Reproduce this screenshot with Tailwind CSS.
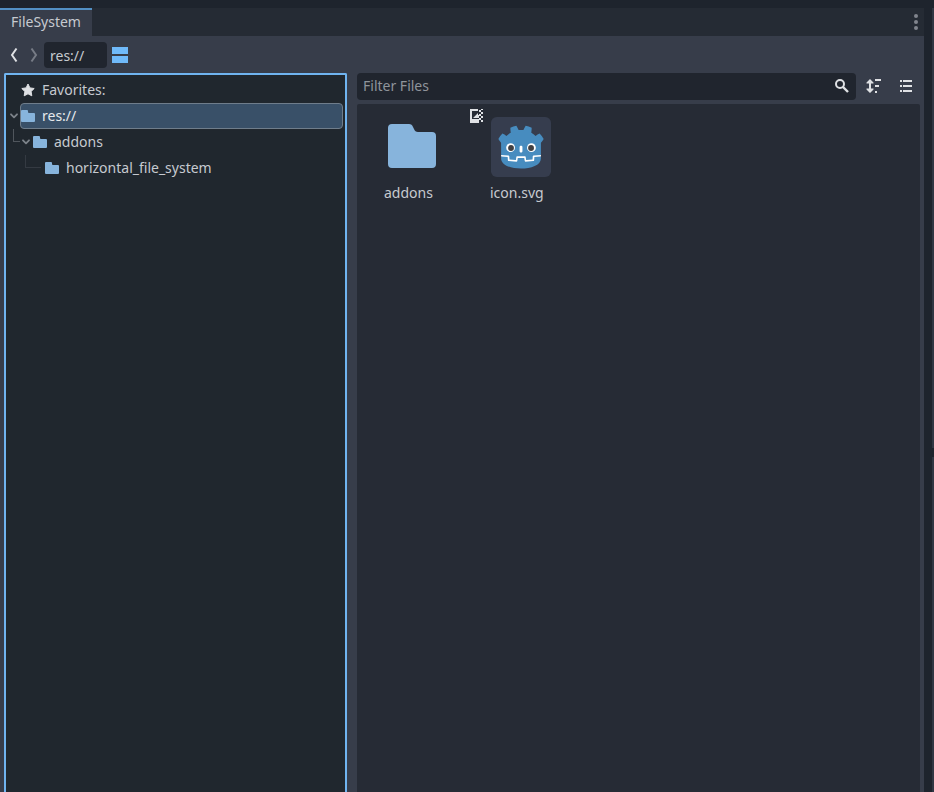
<!DOCTYPE html>
<html lang="en">
<head>
    <meta charset="UTF-8">
    <meta name="viewport" content="width=device-width, initial-scale=1.0">
    <title>FileSystem</title>
    <script src="https://cdn.jsdelivr.net/npm/@tailwindcss/browser@4"></script>
</head>
<body class="h-screen overflow-hidden bg-[#1e242d] text-sm text-[#c6cad0] font-['Noto_Sans',sans-serif]">
    <svg class="hidden">
        <symbol id="folder" viewBox="0 0 14 12">
            <path fill="#87b4dc" d="M1 0h5q1 0 1 1v1q0 1 1 1h5q1 0 1 1v7q0 1-1 1H1q-1 0-1-1V1q0-1 1-1z"/>
        </symbol>
        <symbol id="arrow" viewBox="0 0 8 6">
            <path fill="none" stroke="#7c8289" stroke-width="1.8" stroke-linecap="round" stroke-linejoin="round" d="M1 1.3l3 3 3-3"/>
        </symbol>
    </svg>

    <div class="flex h-full pt-2">
        <div class="flex flex-col flex-1 min-w-0 bg-[#373d4a]">
            <!-- Tab bar -->
            <div class="flex justify-between h-7 bg-[#252b34]">
                <button class="h-7 px-[11px] pb-[2px] border-t-2 border-[#5390c4] bg-[#373d4a]">FileSystem</button>
                <button class="w-4 flex justify-center items-center" aria-label="Dock options">
                    <svg class="w-4 h-4" viewBox="0 0 16 16" fill="#81858d">
                        <circle cx="8" cy="2" r="2"/><circle cx="8" cy="8" r="2"/><circle cx="8" cy="14" r="2"/>
                    </svg>
                </button>
            </div>

            <!-- Path bar -->
            <div class="flex items-center h-9 pt-[2px] pl-1">
                <button class="w-5 flex justify-center" aria-label="Back">
                    <svg class="w-2 h-4" viewBox="0 0 8 16" fill="none" stroke="#dfe1e4" stroke-width="2"><path d="M6.500 1.500L2 8l4.500 6.500"/></svg>
                </button>
                <button class="w-5 flex justify-center" aria-label="Forward">
                    <svg class="w-2 h-4" viewBox="0 0 8 16" fill="none" stroke="#777c86" stroke-width="2"><path d="M1.500 1.500L6 8l-4.500 6.500"/></svg>
                </button>
                <input type="text" value="res://" aria-label="Path" class="w-[63px] h-[26px] px-[6px] rounded-sm bg-[#20252e] outline-none">
                <button class="w-[26px] flex justify-center" aria-label="Change split mode">
                    <svg class="w-4 h-4" viewBox="0 0 16 16" fill="#70bafa"><path d="M0 0h16v7H0zM0 9h16v7H0z"/></svg>
                </button>
            </div>

            <div class="flex flex-1 min-h-0 gap-[10px] pt-[1px] px-1">
                <!-- Folder tree -->
                <ul class="w-[343px] shrink-0 pt-[2px] border-2 border-b-0 border-[#70b4f0] rounded-t-xs bg-[#20272e]">
                    <li class="flex items-center gap-[7px] h-[26px] pl-[15px]">
                        <svg class="w-[14px] h-[14px]" viewBox="0 0 14 14"><path fill="#dfe1e4" stroke="#dfe1e4" stroke-linejoin="round" d="M7 1l1.900 3.900 4.300.6-3.100 3 .7 4.300L7 10.800l-3.800 2 .7-4.300-3.100-3 4.300-.6z"/></svg>
                        <span>Favorites:</span>
                    </li>
                    <li class="flex items-center h-[26px] pl-1 pr-[2px]">
                        <svg class="w-2 h-[6px] mr-[2px]"><use href="#arrow"/></svg>
                        <div class="flex flex-1 items-center gap-[7px] h-full border border-[#6f7d8b] rounded-sm bg-[#395068] text-[#e6e9ec]">
                            <svg class="w-[14px] h-3"><use href="#folder"/></svg>
                            <span>res://</span>
                        </div>
                    </li>
                    <li class="flex items-center h-[26px] pl-[7px]">
                        <div class="w-[7px] h-[13px] mr-[2px] mb-[13px] border-l border-b border-[#50565d]"></div>
                        <svg class="w-2 h-[6px] mr-[3px]"><use href="#arrow"/></svg>
                        <svg class="w-[14px] h-3 mr-[7px]"><use href="#folder"/></svg>
                        <span>addons</span>
                    </li>
                    <li class="flex items-center h-[26px] pl-[19px]">
                        <div class="w-4 h-[13px] mr-1 mb-[13px] border-l border-b border-[#343a42]"></div>
                        <svg class="w-[14px] h-3 mr-[7px]"><use href="#folder"/></svg>
                        <span>horizontal_file_system</span>
                    </li>
                </ul>

                <!-- File list -->
                <div class="flex flex-col flex-1 min-w-0 gap-1">
                    <div class="flex h-[27px]">
                        <label class="flex flex-1 items-center min-w-0 px-[6px] pb-px rounded-sm bg-[#20252e]">
                            <input type="text" placeholder="Filter Files" aria-label="Filter Files" class="flex-1 min-w-0 outline-none placeholder:text-[#8f949b]">
                            <svg class="w-4 h-4" viewBox="0 0 16 16" fill="none" stroke="#dfe1e4" stroke-width="2"><circle cx="6" cy="6" r="4"/><path stroke-width="2.400" d="M9 9l5 5"/></svg>
                        </label>
                        <button class="w-9 pb-px flex justify-center items-center" aria-label="Sort files">
                            <svg class="w-4 h-4" viewBox="0 0 16 16" fill="#dfe1e4"><path d="M4 1L.5 4.500V5.500H3v5H.5v1L4 15l3.500-3.500v-1H5v-5h2.500v-1zM9 1h6v2H9zM9 7h4v2H9zM9 13h2v2H9z"/></svg>
                        </button>
                        <button class="w-7 pb-px flex justify-center items-center" aria-label="List view">
                            <svg class="w-4 h-4" viewBox="0 0 16 16" fill="#dfe1e4"><path d="M2 2h2v2H2zM2 7h2v2H2zM2 12h2v2H2zM5 2h9v2H5zM5 7h9v2H5zM5 12h9v2H5z"/></svg>
                        </button>
                    </div>

                    <ul class="flex flex-1 items-start pt-3 pl-[22px] rounded-t-xs bg-[#262b35]">
                        <li class="w-[66px] mr-[42px]">
                            <svg class="w-[66px] h-[62px]" viewBox="0 0 66 62"><path fill="#87b4dc" d="M13 8h17q3 0 4 3l1 2q1 3 4 3h14q4 0 4 4v28q0 4-4 4H13q-4 0-4-4V12q0-4 4-4z"/></svg>
                            <span class="block pl-[5px] mt-[5px]">addons</span>
                        </li>
                        <li class="relative w-[66px]">
                            <!-- image type badge -->
                            <svg class="absolute -left-[18px] -top-2 w-4 h-4" viewBox="0 0 16 16" fill="#dfe1e4">
                                <path d="M1 1h8v2H3v8h7v4H1zM4 10l5-5v2h1v3z"/>
                                <path d="M10 2h2v2h-2zM12 1h2v1h-2zM12 4h2v2h-2zM10 6h2v2h-2zM12 8h2v2h-2zM10 10h2v2h-2zM12 12h2v2h-2z"/>
                            </svg>
                            <svg class="w-[62px] h-[62px] ml-[3px]" viewBox="0 0 128 128">
                                <rect x="2" y="2" width="124" height="124" rx="12" fill="#363d4e"/>
                                <g fill="#fff" transform="scale(.101) translate(122 122)">
                                    <path d="M105 673v33q407 354 814 0v-33z"/>
                                    <path fill="#478cbf" d="m105 673 152 14q12 1 15 14l4 67 132 10 8-61q2-11 15-15h162q13 4 15 15l8 61 132-10 4-67q3-13 15-14l152-14V427q30-39 56-81-35-59-83-108-43 20-82 47-40-37-88-64 7-51 8-102-59-28-123-42-26 43-46 89-49-7-98 0-20-46-46-89-64 14-123 42 1 51 8 102-48 27-88 64-39-27-82-47-48 49-83 108 26 42 56 81zm0 33v39c0 276 813 276 814 0v-39l-134 12-5 69q-2 10-14 13l-162 11q-12 0-16-11l-10-65H446l-10 65q-4 11-16 11l-162-11q-12-3-14-13l-5-69z"/>
                                    <path d="M483 600c0 34 58 34 58 0v-86c0-34-58-34-58 0z"/>
                                    <circle cx="725" cy="526" r="90"/><circle cx="299" cy="526" r="90"/>
                                </g>
                                <g fill="#414042" transform="scale(.101) translate(122 122)">
                                    <circle cx="307" cy="532" r="60"/><circle cx="717" cy="532" r="60"/>
                                </g>
                            </svg>
                            <span class="block pl-[3px] mt-[5px]">icon.svg</span>
                        </li>
                    </ul>
                </div>
            </div>
        </div>

        <!-- Edge of the neighbouring dock -->
        <div class="flex flex-col items-end w-[10px] gap-[9px]">
            <div class="w-[2px] flex-[440] bg-[#303743]"></div>
            <div class="w-[2px] flex-[335] bg-[#303743]"></div>
        </div>
    </div>
</body>
</html>
